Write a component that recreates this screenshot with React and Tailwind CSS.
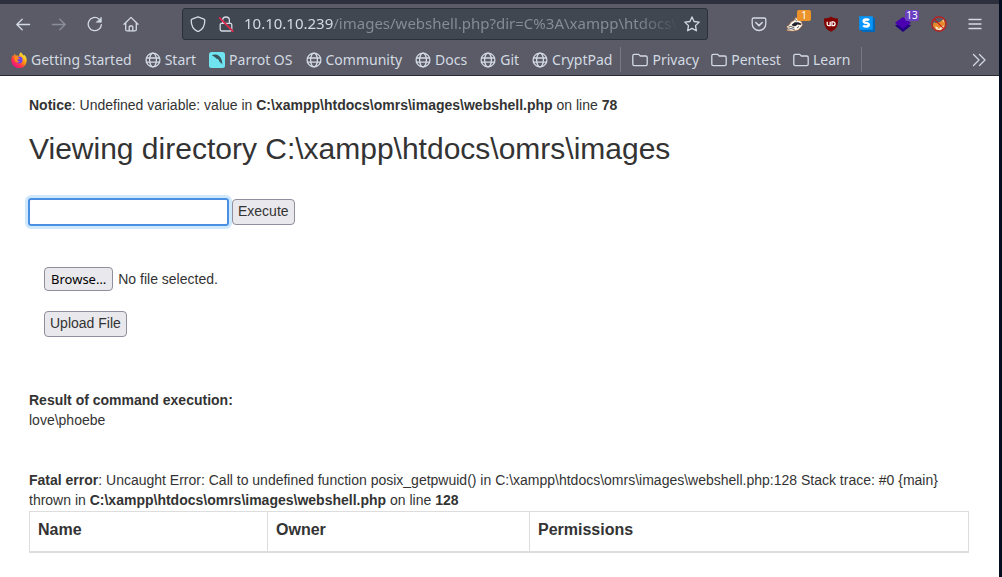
import React, { useRef } from "react";

const stroke = {
  fill: "none",
  stroke: "currentColor",
  strokeWidth: 1.3,
  strokeLinecap: "round",
  strokeLinejoin: "round",
};

function Svg({ children, className = "w-4 h-4" }) {
  return (
    <svg viewBox="0 0 16 16" className={`shrink-0 ${className}`} aria-hidden="true" {...stroke}>
      {children}
    </svg>
  );
}

const BackIcon = () => (
  <Svg>
    <path d="M14.6 8.5H1.8M7.2 3.2L1.8 8.5l5.4 5.3" />
  </Svg>
);

const ForwardIcon = () => (
  <Svg>
    <path d="M1.4 8.5h12.8M8.8 3.2l5.4 5.3-5.4 5.3" />
  </Svg>
);

const ReloadIcon = () => (
  <Svg>
    <path d="M14.4 8.6A6.6 6.6 0 1 1 11.9 2.9" />
    <path d="M14.4 1.4v4.9H9.5z" fill="currentColor" strokeWidth="0.6" />
  </Svg>
);

const HomeIcon = () => (
  <Svg>
    <path d="M1 8.2L8 1.4l7 6.8" />
    <path d="M2.7 7v6.4c0 .9.6 1.5 1.5 1.5h7.6c.9 0 1.5-.6 1.5-1.5V7" />
    <path d="M6.2 14.8V11c0-.6.4-1 1-1h1.6c.6 0 1 .4 1 1v3.8" />
  </Svg>
);

const ShieldIcon = () => (
  <Svg>
    <path d="M8 .8l6 2.3c.5.2.8.6.8 1.1 0 5-1.9 9.2-6.2 11.1-.4.2-.8.2-1.2 0C3.1 13.4 1.2 9.2 1.2 4.2c0-.5.3-.9.8-1.1z" />
  </Svg>
);

const LockIcon = () => (
  <Svg>
    <path d="M4.6 7V4.4a3.4 3.4 0 0 1 6.8 0V7" />
    <path d="M3.6 7.3h8.8c.8 0 1.4.6 1.4 1.4v4.9c0 .8-.6 1.4-1.4 1.4H3.6c-.8 0-1.4-.6-1.4-1.4V8.7c0-.8.6-1.4 1.4-1.4z" />
    <path d="M1.6 1.9L14.8 15.2" stroke="#e22850" strokeWidth="1.7" />
  </Svg>
);

const StarIcon = () => (
  <Svg>
    <path d="M8 .9l2.1 4.6 5.1.6-3.7 3.5.9 5.2L8 12.4l-4.4 2.4.9-5.2L.8 6.1l5.1-.6z" />
  </Svg>
);

const PocketIcon = () => (
  <Svg>
    <path d="M2.7 2h10.6c.9 0 1.5.6 1.5 1.5v4.2a6.8 6.8 0 0 1-13.6 0V3.5C1.2 2.6 1.8 2 2.7 2z" />
    <path d="M4.8 6.5L8 9.6l3.2-3.1" strokeWidth="1.5" />
  </Svg>
);

const MenuIcon = () => (
  <Svg>
    <path d="M2 3.5h12M2 8h12M2 12.5h12" />
  </Svg>
);

const GlobeIcon = () => (
  <Svg>
    <circle cx="8" cy="8" r="6.9" />
    <ellipse cx="8" cy="8" rx="3.4" ry="6.9" />
    <path d="M1.4 6h13.2M1.4 10.2h13.2" />
  </Svg>
);

const FolderIcon = () => (
  <Svg>
    <path d="M.8 4v8.2c0 .8.6 1.4 1.4 1.4h11.6c.8 0 1.4-.6 1.4-1.4V5.4c0-.8-.6-1.4-1.4-1.4H8.3L6.7 2.4H2.2C1.4 2.4.8 3.1.8 4z" />
  </Svg>
);

const FirefoxIcon = () => (
  <svg viewBox="0 0 16 16" className="w-4 h-4 shrink-0" aria-hidden="true">
    <defs>
      <linearGradient id="fox" x1="0.85" y1="0.1" x2="0.2" y2="0.9">
        <stop offset="0" stopColor="#fff044" />
        <stop offset="0.4" stopColor="#ff980e" />
        <stop offset="0.7" stopColor="#ff3647" />
        <stop offset="1" stopColor="#e31587" />
      </linearGradient>
    </defs>
    <path
      d="M10 .3c.6 1.5 1.8 2.2 2.7 3.3l.7-.5c1.5 1.5 2.5 3.5 2.3 5.7A7.7 7.7 0 0 1 .3 8.3c0-2.2.7-4 1.9-5.3l.4 1.3L4 1.6l.7 2.1c1.2-.3 2.5-.2 3.6.4C8 2.7 8.7 1 10 .3z"
      fill="url(#fox)"
    />
    <circle cx="8.2" cy="8" r="3.4" fill="#7542e5" />
    <path d="M3.4 5.2c1.600-.8 3-.4 4 .5l1.300.6c-.5.9-1.500 1-2.200 1.300-.4 1.500.7 2.300 2 1.900-1.300 1.700-3.900 1.300-4.700-.7-.4-1.100-.5-2.500-.4-3.600z" fill="#ff8a16" />
  </svg>
);

const ParrotIcon = () => (
  <svg viewBox="0 0 16 16" className="w-4 h-4 shrink-0" aria-hidden="true">
    <rect width="16" height="16" rx="2.5" fill="#6fe3f0" />
    <path d="M2.8 3.4c2.6-1.3 5.600-1 7.600.9 2.100 2.100 3 5.200 2.900 8.500-.5-1.200-1.200-2-2-2.700l-.1 1.300c-.6-2-1.400-3.600-2.700-4.900l-.5.8C6.900 5.600 5.400 4.300 2.800 3.400z" fill="#385660" />
  </svg>
);

const BadgerIcon = () => (
  <svg viewBox="0 0 18 16" className="w-[18px] h-4 shrink-0" aria-hidden="true">
    <path
      d="M1 14.500l1-2.300-1.400-1.400 2.600-1.800 2-3 3-1.600 1.600-3 2.400 2.200 3.400 2.400.8 3-1.800 2.600-2.600 2.400-5 1z"
      fill="#fbf6ee"
      stroke="#d6702a"
      strokeWidth="0.5"
    />
    <path d="M5.600 8.800l3.200-2.600h3.400l3.400 1.600-1 1.200-3-.4-1.800 1.400-2.600.2z" fill="#24242c" />
    <path d="M2.400 11l2.400-.6 3.600 1.600M2 13.200l3-.6 3.600 1M11 12l2-1.600" fill="none" stroke="#33333b" strokeWidth="0.8" />
    <path d="M9.400 3.800l1.200 1" stroke="#24242c" strokeWidth="1" />
  </svg>
);

const UblockIcon = () => (
  <svg viewBox="0 0 16 16" className="w-4 h-4 shrink-0" aria-hidden="true">
    <path d="M8 .5c1.9 1.4 4 1.9 7 1.9 0 6.4-.3 9.8-7 13.3C1.3 12.200 1 8.800 1 2.400c3 0 5.100-.5 7-1.900z" fill="#800000" />
    <path d="M4.200 5.800v2.400c0 1 .5 1.500 1.500 1.500h1.500V5.800" fill="none" stroke="#fff" strokeWidth="1.3" />
    <path d="M9 5.800v3.900h1.100a1.950 1.950 0 0 0 0-3.900z" fill="none" stroke="#fff" strokeWidth="1.3" />
  </svg>
);

const StylusIcon = () => (
  <svg viewBox="0 0 16 16" className="w-4 h-4 shrink-0" aria-hidden="true">
    <path d="M2 2h14v14H3.500L.4 13z" fill="#0068b8" />
    <rect width="13.6" height="13.6" x="0.2" y="0.2" fill="#0796fb" />
    <path d="M10 4.300C9 3.200 4.600 2.800 4.600 5.200c0 2.300 5.200 1.200 5.200 3.500 0 2.200-4.300 2.200-5.600.8" fill="none" stroke="#fff" strokeWidth="2.4" />
  </svg>
);

const LayersIcon = () => (
  <svg viewBox="0 0 16 16" className="w-4 h-4 shrink-0" aria-hidden="true">
    <path d="M0 9.600l2.500-1.400h11L16 9.600 8 16z" fill="#210080" />
    <path d="M8 1l8 5.800-8 6-8-6z" fill="#4a00b0" />
  </svg>
);

const NoFoxIcon = () => (
  <svg viewBox="0 0 16 16" className="w-4 h-4 shrink-0" aria-hidden="true">
    <path d="M2.500 6.500l3 .6 3.500-1 3.600-3 1.600 4-.8 4.400L9.400 14.400l-5-1L2 10z" fill="#e88a2c" />
    <path d="M4 10.500l2.400.6 1.600 2 2-2.600 3-1-1 2.700-3 2-3.600-.6zM11 4.200l1.800.4.2 2z" fill="#f6e3c8" />
    <circle cx="8" cy="8" r="7.2" fill="none" stroke="#c51a1a" strokeWidth="1.2" />
    <path d="M2.900 2.900l10.200 10.200" stroke="#c51a1a" strokeWidth="1.2" />
  </svg>
);

const navButtons = [
  { label: "Back", icon: BackIcon },
  { label: "Forward", icon: ForwardIcon, disabled: true },
  { label: "Reload", icon: ReloadIcon },
  { label: "Home", icon: HomeIcon },
];

const extensions = [
  { label: "Save to Pocket", icon: PocketIcon },
  { label: "Privacy Badger", icon: BadgerIcon, badge: "1", badgeColor: "bg-[#ec9329]" },
  { label: "uBlock Origin", icon: UblockIcon },
  { label: "Stylus", icon: StylusIcon },
  { label: "Wappalyzer", icon: LayersIcon, badge: "13", badgeColor: "bg-[#6a3fc0]" },
  { label: "FoxyProxy", icon: NoFoxIcon },
  { label: "Menu", icon: MenuIcon },
];

const bookmarks = [
  { title: "Getting Started", icon: FirefoxIcon },
  { title: "Start", icon: GlobeIcon },
  { title: "Parrot OS", icon: ParrotIcon },
  { title: "Community", icon: GlobeIcon },
  { title: "Docs", icon: GlobeIcon },
  { title: "Git", icon: GlobeIcon },
  { title: "CryptPad", icon: GlobeIcon },
];

const folders = ["Privacy", "Pentest", "Learn"];

function ToolbarButton({ label, icon: Icon, disabled, badge, badgeColor }) {
  return (
    <button
      type="button"
      aria-label={label}
      disabled={disabled}
      className="relative flex h-8 w-9 shrink-0 items-center justify-center disabled:opacity-40"
    >
      <Icon />
      {badge && (
        <span
          className={`absolute top-0.5 left-5 h-[11px] min-w-[14px] rounded-[2px] px-px text-center text-[10px] leading-[11px] text-white ${badgeColor}`}
        >
          {badge}
        </span>
      )}
    </button>
  );
}

function BrowserBar() {
  return (
    <header className="border-t-4 border-b border-t-[#2f303e] border-b-[#2a2a36] bg-[#5a5b66] font-['Noto_Sans',sans-serif] text-sm text-[#d3dae3]">
      <div className="flex h-10 items-center justify-between gap-[33px] pr-1.5 pl-[5px]">
        <nav className="flex">
          {navButtons.map((b) => (
            <ToolbarButton key={b.label} {...b} />
          ))}
        </nav>
        <div className="flex h-8 min-w-0 flex-1 items-center rounded-[3px] border border-[#2c303c] bg-[#414751] px-[7px] text-[15px]">
          <ShieldIcon />
          <div className="ml-3">
            <LockIcon />
          </div>
          <div className="ml-2.5 min-w-0 flex-1 overflow-hidden mask-r-from-90% whitespace-nowrap">
            10.10.10.239
            <span className="text-[#868b94]">/images/webshell.php?dir=C%3A\xampp\htdocs\</span>
          </div>
          <button type="button" aria-label="Bookmark this page" className="ml-1">
            <StarIcon />
          </button>
        </div>
        <div className="flex">
          {extensions.map((e) => (
            <ToolbarButton key={e.label} {...e} />
          ))}
        </div>
      </div>

      <div className="flex h-[31px] items-center pr-3 pl-[11px]">
        <div className="flex items-center gap-[13px]">
          {bookmarks.map(({ title, icon: Icon }) => (
            <a key={title} href="#" className="flex items-center gap-1 whitespace-nowrap">
              <Icon />
              {title}
            </a>
          ))}
        </div>
        <div className="ml-2 flex h-[25px] items-center gap-3 border-x border-[#767883] px-[11px]">
          {folders.map((title) => (
            <a key={title} href="#" className="flex items-center gap-1 whitespace-nowrap">
              <FolderIcon />
              {title}
            </a>
          ))}
        </div>
        <button type="button" aria-label="More bookmarks" className="ml-auto">
          <Svg>
            <path d="M2.5 2.5L8 8l-5.5 5.5M8.5 2.5L14 8l-5.5 5.5" />
          </Svg>
        </button>
      </div>
    </header>
  );
}

const submitClass =
  "h-[26px] rounded border border-[#8f8f9d] bg-[#e9e9ed] px-[5px] pb-0.5 leading-5 whitespace-nowrap";

export default function App() {
  const fileRef = useRef(null);

  return (
    <div className="min-h-screen border-r-3 border-[#020d1f] bg-white">
      <BrowserBar />

      <main className="pt-[19px] pr-[30px] pl-[29px] font-['Liberation_Sans',Arial,sans-serif] text-sm leading-5 text-[#333]">
        <p>
          <b>Notice</b>: Undefined variable: value in <b>C:\xampp\htdocs\omrs\images\webshell.php</b> on line <b>78</b>
        </p>

        <h1 className="mt-4 text-[30px] leading-9">Viewing directory C:\xampp\htdocs\omrs\images</h1>

        <form className="mt-[31px] flex items-center gap-[3px]" onSubmit={(e) => e.preventDefault()}>
          <input
            type="text"
            aria-label="Command"
            className="-ml-px h-7 w-[201px] rounded-[3px] border-2 border-[#4a90e2] px-1 ring-3 ring-[#d0e8fb] outline-none"
          />
          <button type="submit" className={submitClass}>
            Execute
          </button>
        </form>

        <form className="mt-[41px] ml-[15px]" onSubmit={(e) => e.preventDefault()}>
          <div className="flex items-center gap-[5px]">
            <input ref={fileRef} id="upload" type="file" className="hidden" />
            <button
              type="button"
              onClick={() => fileRef.current.click()}
              className="h-6 rounded border border-[#8f8f9d] bg-[#e9e9ed] px-1.5 font-['Noto_Sans',sans-serif] text-[13px] text-black"
            >
              Browse…
            </button>
            <label htmlFor="upload">No file selected.</label>
          </div>
          <button type="submit" className={`mt-5 block ${submitClass}`}>
            Upload File
          </button>
        </form>

        <div className="mt-[53px]">
          <b>Result of command execution:</b>
          <p>love\phoebe</p>
        </div>

        <p className="mt-10">
          <b>Fatal error</b>: Uncaught Error: Call to undefined function posix_getpwuid() in
          C:\xampp\htdocs\omrs\images\webshell.php:128 Stack trace: #0 {"{main}"} thrown in{" "}
          <b>C:\xampp\htdocs\omrs\images\webshell.php</b> on line <b>128</b>
        </p>

        <table className="mt-px w-full table-fixed border-collapse border border-[#ddd] text-left text-base leading-5">
          <thead>
            <tr>
              <th className="w-[238px] border border-b-2 border-[#ddd] px-2 pt-2 pb-[11px]">Name</th>
              <th className="w-[262px] border border-b-2 border-[#ddd] px-2 pt-2 pb-[11px]">Owner</th>
              <th className="border border-b-2 border-[#ddd] px-2 pt-2 pb-[11px]">Permissions</th>
            </tr>
          </thead>
        </table>
      </main>
    </div>
  );
}
